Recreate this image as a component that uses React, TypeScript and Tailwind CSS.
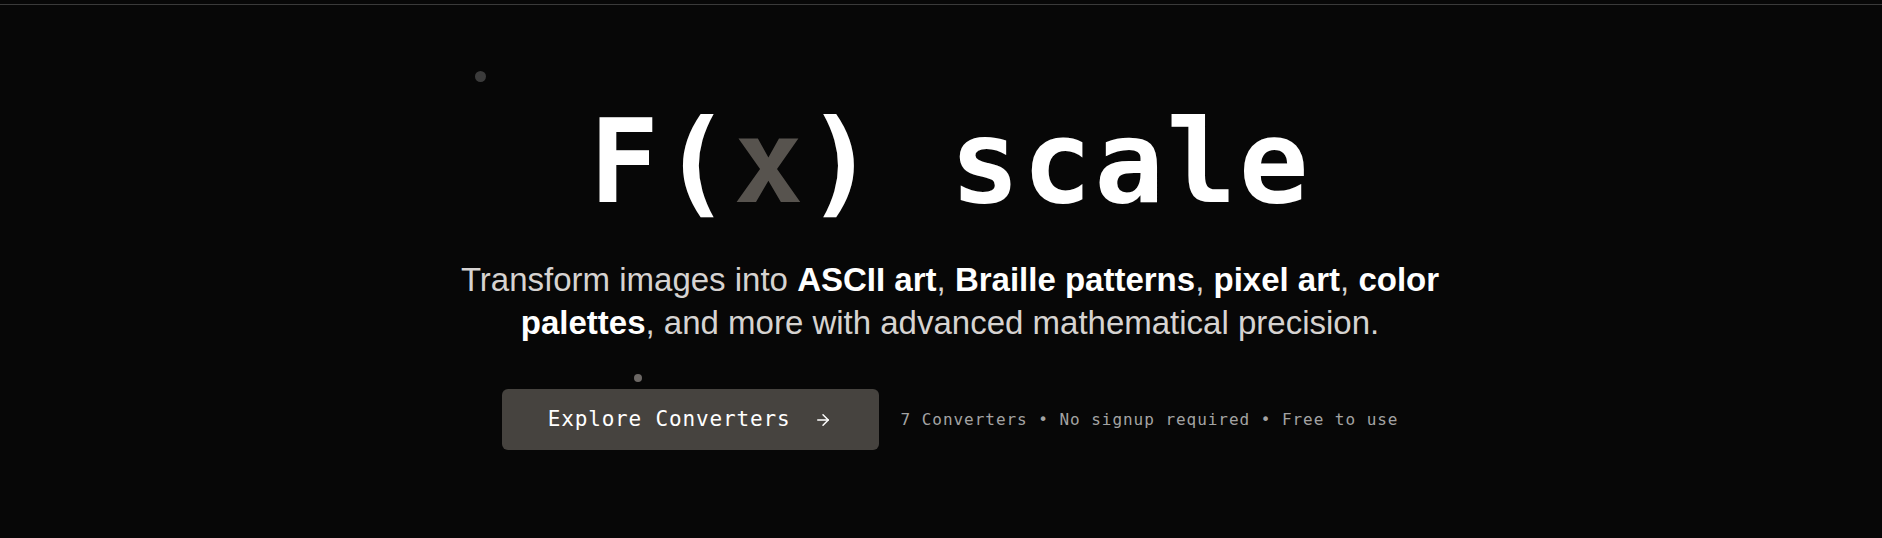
import { ArrowRight } from "lucide-react";

export default function App() {
  return (
    <div className="relative min-h-[538px] w-full overflow-hidden bg-[#070707]">
      {/* top rule */}
      <div className="h-1" />
      <div className="h-px w-full bg-[#3a3a3a]" />

      {/* floating dots */}
      <div className="absolute left-[475px] top-[71px] h-[11px] w-[11px] rounded-full bg-[#3b3b3b]" />
      <div className="absolute left-[634px] top-[374px] h-2 w-2 rounded-full bg-[#6b6764]" />

      {/* Hero */}
      <div className="flex flex-col items-center pl-[18px] pt-[99px]">
        <h1 className="font-['DejaVu_Sans_Mono',monospace] text-[116px] font-bold leading-none tracking-[0.02em] text-white">
          F(<span className="text-[#57534e]">x</span>) scale
        </h1>

        <p className="mt-[38px] max-w-5xl text-center font-['Liberation_Sans',Arial,sans-serif] text-[33px] leading-[43px] text-[#d6d3d1]">
          Transform images into <strong className="font-bold text-white">ASCII art</strong>,{" "}
          <strong className="font-bold text-white">Braille patterns</strong>,{" "}
          <strong className="font-bold text-white">pixel art</strong>,{" "}
          <strong className="font-bold text-white">color palettes</strong>, and more with advanced
          mathematical precision.
        </p>

        <div className="mt-[45px] flex items-center gap-[22px] font-['DejaVu_Sans_Mono',monospace]">
          <button className="flex h-[61px] w-[377px] items-center justify-center gap-6 rounded-md bg-[#46433f] text-[21px] tracking-[0.04em] text-white">
            <span>Explore Converters</span>
            <ArrowRight size={18} strokeWidth={2} />
          </button>
          <span className="text-[16px] tracking-[0.06em] text-[#a3a3a3]">
            7 Converters • No signup required • Free to use
          </span>
        </div>
      </div>
    </div>
  );
}
